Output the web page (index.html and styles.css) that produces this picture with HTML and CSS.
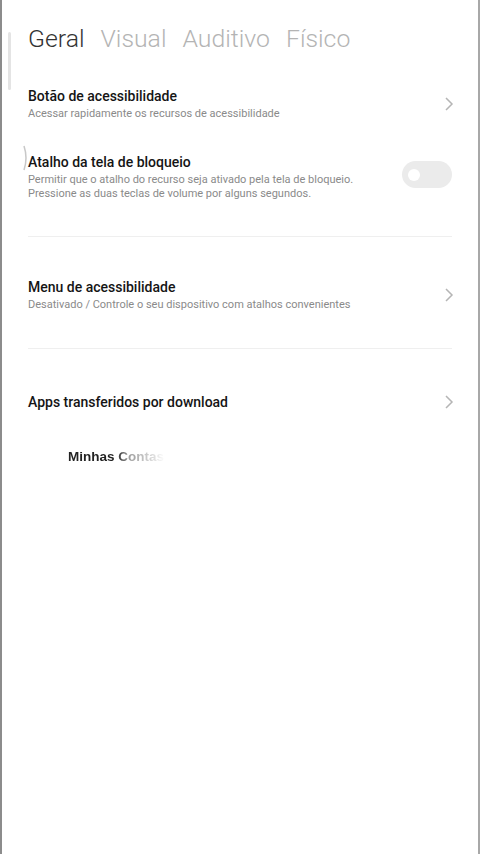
FILE: index.html
```html
<!DOCTYPE html>
<html lang="pt">
<head>
  <meta charset="UTF-8">
  <meta name="viewport" content="width=device-width, initial-scale=1.0">
  <title>Acessibilidade</title>
  <link rel="stylesheet" href="styles.css">
</head>
<body>
  <div class="tela">
    <div class="rolagem"></div>
    <svg class="arco" width="6" height="26" viewBox="0 0 6 26"><path d="M1 1q4 12 0 24" fill="none" stroke="#c8c8c8" stroke-width="1.5"/></svg>

    <nav class="abas">
      <span class="aba ativa">Geral</span>
      <span class="aba">Visual</span>
      <span class="aba">Auditivo</span>
      <span class="aba">Físico</span>
    </nav>

    <div class="item">
      <div class="texto">
        <div class="titulo">Botão de acessibilidade</div>
        <div class="descricao">Acessar rapidamente os recursos de acessibilidade</div>
      </div>
      <svg class="seta" width="10" height="16" viewBox="0 0 10 16"><path d="M2 2l6 6-6 6" fill="none" stroke="#b5b5b5" stroke-width="1.5"/></svg>
    </div>

    <div class="item item-bloqueio">
      <div class="texto">
        <div class="titulo">Atalho da tela de bloqueio</div>
        <div class="descricao">Permitir que o atalho do recurso seja ativado pela tela de bloqueio.<br>Pressione as duas teclas de volume por alguns segundos.</div>
      </div>
      <div class="chave"><span class="bolinha"></span></div>
    </div>

    <hr class="divisor">

    <div class="item item-menu">
      <div class="texto">
        <div class="titulo">Menu de acessibilidade</div>
        <div class="descricao">Desativado / Controle o seu dispositivo com atalhos convenientes</div>
      </div>
      <svg class="seta" width="10" height="16" viewBox="0 0 10 16"><path d="M2 2l6 6-6 6" fill="none" stroke="#b5b5b5" stroke-width="1.5"/></svg>
    </div>

    <hr class="divisor divisor-2">

    <div class="item item-apps">
      <div class="texto">
        <div class="titulo">Apps transferidos por download</div>
      </div>
      <svg class="seta" width="10" height="16" viewBox="0 0 10 16"><path d="M2 2l6 6-6 6" fill="none" stroke="#b5b5b5" stroke-width="1.5"/></svg>
    </div>

    <div class="marca">Minhas Contas</div>
  </div>
</body>
</html>
```

FILE: styles.css
```css
body {
  margin: 0;
  background-color: #fff;
  font-family: Roboto, "Liberation Sans", sans-serif;
}

.tela {
  position: relative;
  height: 854px;
  box-sizing: border-box;
  border-left: 2px solid #8c8c8c;
  border-right: 2px solid #a8a8a8;
  padding: 0 26px 0 26px;
}

.rolagem {
  position: absolute;
  left: 6px;
  top: 32px;
  width: 3px;
  height: 58px;
  background-color: #e4e4e4;
  border-radius: 2px;
}

.arco {
  position: absolute;
  left: 21px;
  top: 145px;
}

.abas {
  display: flex;
  gap: 16px;
  padding-top: 24px;
  font-size: 24.8px;
  line-height: 30px;
  font-weight: 300;
  color: #b4b4b4;
}

.aba.ativa {
  color: #333;
}

.item {
  display: flex;
  align-items: center;
  justify-content: space-between;
  padding-top: 33px;
}

.titulo {
  font-size: 14px;
  font-weight: 500;
  color: #151515;
  line-height: 18px;
}

.descricao {
  font-size: 11px;
  color: #8a8a8a;
  line-height: 14px;
  margin-top: 2px;
}

.seta {
  margin-right: -2px;
}

.item-bloqueio {
  padding-top: 32px;
}

.chave {
  width: 50px;
  height: 27px;
  border-radius: 14px;
  background-color: #ebebeb;
  display: flex;
  align-items: center;
  padding-left: 6px;
  box-sizing: border-box;
  margin-top: -5px;
}

.bolinha {
  width: 12px;
  height: 12px;
  border-radius: 50%;
  background-color: #fff;
}

.divisor {
  border: none;
  border-top: 1px solid #efefef;
  margin: 35px 0 0 0;
}

.divisor-2 {
  margin-top: 36px;
}

.item-menu {
  padding-top: 41px;
}

.item-apps {
  padding-top: 44px;
}

.marca {
  margin: 38px 0 0 40px;
  font-family: "Liberation Sans", Arial, sans-serif;
  font-weight: bold;
  font-size: 13.5px;
  background: linear-gradient(to right, #222 0, #222 48px, #999 60px, #ddd 86px, #fff 97px);
  -webkit-background-clip: text;
  background-clip: text;
  color: transparent;
  width: 120px;
}
```
